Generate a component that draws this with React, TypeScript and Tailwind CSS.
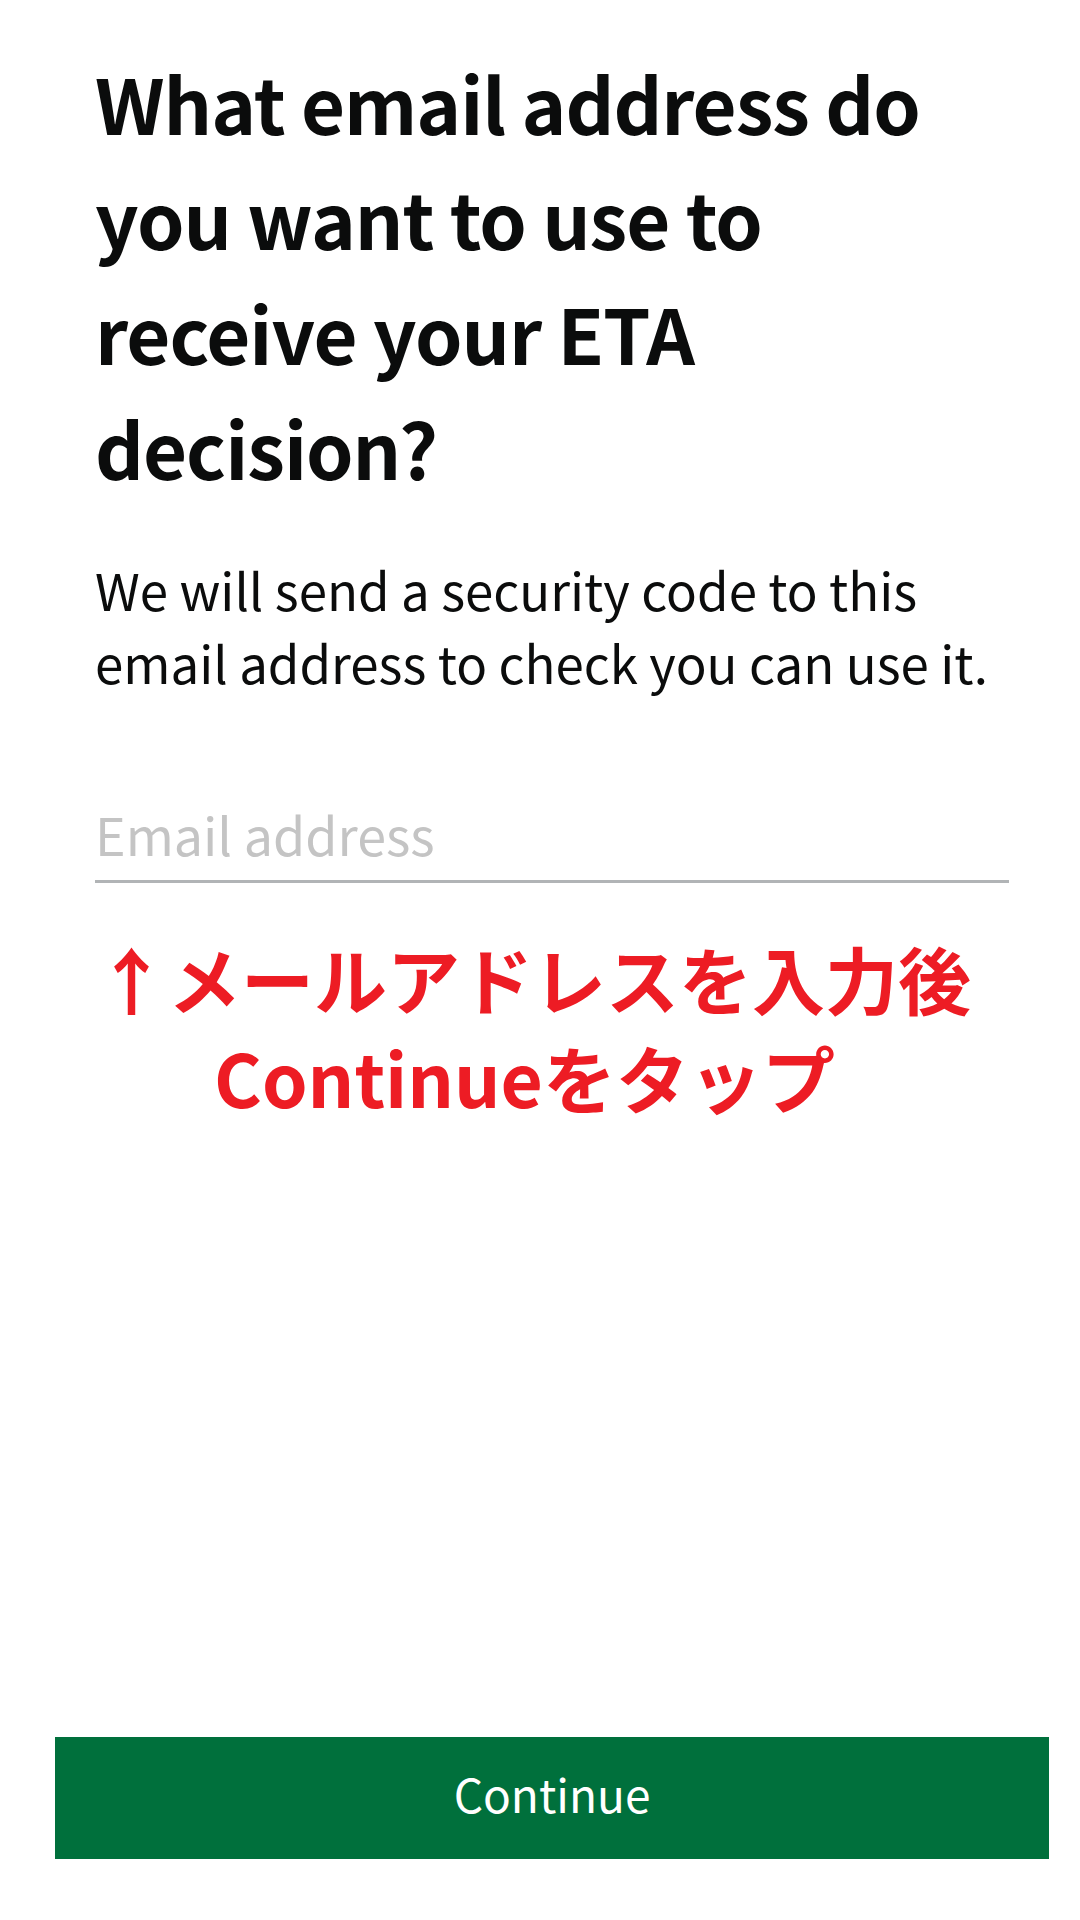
import React from 'react';

const sans = { fontFamily: '"Noto Sans CJK JP", "Noto Sans", sans-serif' };

export default function App() {
  return (
    <div className="flex h-[1920px] w-[1080px] flex-col bg-white" style={sans}>
      <div className="px-[95px] pt-[45px]">
        <h1 className="text-[76px] font-bold leading-[115px] tracking-[-1px] text-[#0b0c0c]">
          What email address do you want to use to receive your ETA decision?
        </h1>

        <p className="mt-[48px] w-[930px] text-[51px] leading-[73px] text-[#0b0c0c]">
          We will send a security code to this email address to check you can use it.
        </p>

        <input
          type="email"
          placeholder="Email address"
          className="mt-[103px] block w-[914px] border-b-[3px] border-[#b1b4b6] bg-transparent pb-[14px] text-[52px] leading-[64px] text-[#0b0c0c] outline-none placeholder:text-[#c4c4c4]"
        />

        <div className="mt-[45px] flex flex-col items-start whitespace-nowrap text-[73px] font-bold leading-[99px] text-[#ed1c24]">
          <div>↑メールアドレスを入力後</div>
          <div className="ml-[119px]">Continueをタップ</div>
        </div>
      </div>

      <button className="mx-[55px] mb-[61px] mt-auto h-[122px] w-[994px] bg-[#00703c] pb-[10px] text-[46px] text-white">
        Continue
      </button>
    </div>
  );
}
